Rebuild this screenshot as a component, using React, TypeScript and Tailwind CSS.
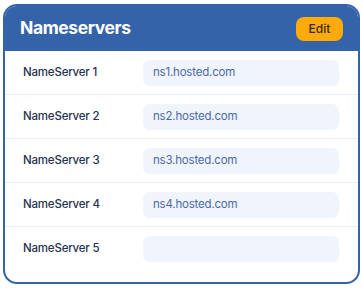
const SERVERS = [
  { label: 'NameServer 1', value: 'ns1.hosted.com' },
  { label: 'NameServer 2', value: 'ns2.hosted.com' },
  { label: 'NameServer 3', value: 'ns3.hosted.com' },
  { label: 'NameServer 4', value: 'ns4.hosted.com' },
  { label: 'NameServer 5', value: '' },
]

export default function App() {
  return (
    <div className="min-h-screen bg-white pl-[3px] pt-[4px]" style={{ fontFamily: 'Inter, "Noto Sans", sans-serif' }}>
      <div className="w-[357px] overflow-hidden rounded-[14px] border-2 border-[#3563a9] bg-white">
        <div className="flex h-[45px] items-center justify-between bg-[#3563a9] pl-[15px] pr-[15px]">
          <h2 className="text-[17.5px] font-bold tracking-[-0.4px] text-white">Nameservers</h2>
          <button
            type="button"
            className="flex h-[24px] w-[47px] items-center justify-center rounded-[8px] bg-[#fdaa0b] text-[12px] font-medium text-[#3a2a10]"
          >
            Edit
          </button>
        </div>

        <div className="pb-[11px]">
          {SERVERS.map((s, i) => (
            <div
              key={s.label}
              className={
                i < SERVERS.length - 1
                  ? 'flex h-[44px] items-center border-b border-[#e9eef6] pl-[18px] pr-[19px]'
                  : 'flex h-[44px] items-center pl-[18px] pr-[19px]'
              }
            >
              <span className="w-[120px] text-[11.5px] font-medium tracking-[-0.2px] text-[#26324f]">{s.label}</span>
              <div className="flex h-[26px] flex-1 items-center rounded-[7px] bg-[#eff4fd] px-[10px] text-[11.5px] tracking-[-0.2px] text-[#4d6aa3]">
                {s.value}
              </div>
            </div>
          ))}
        </div>
      </div>
    </div>
  )
}
